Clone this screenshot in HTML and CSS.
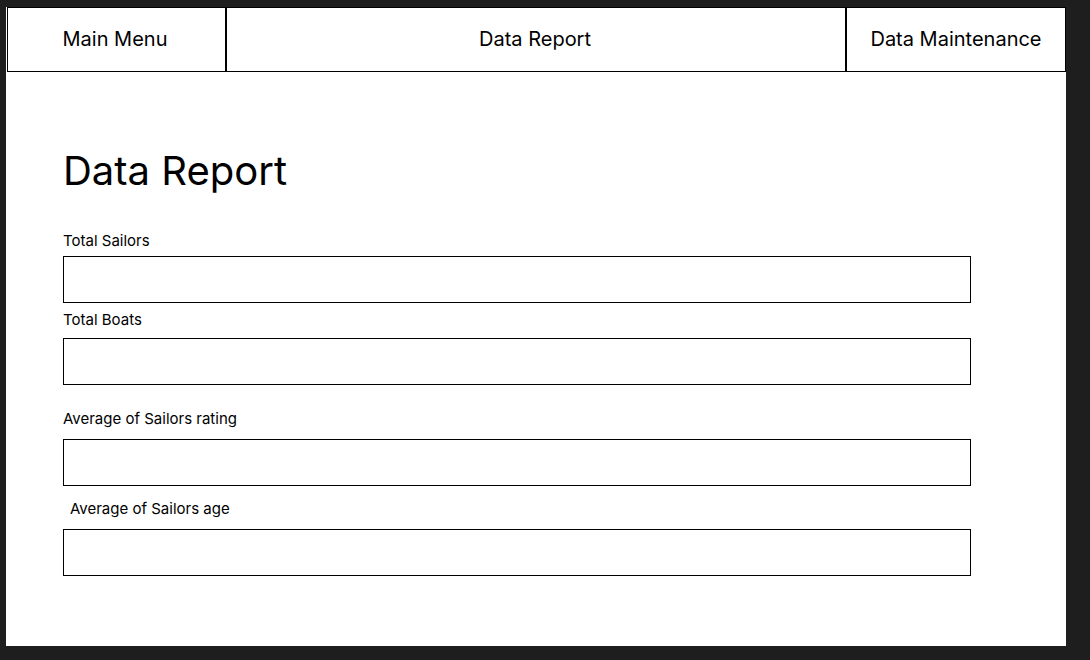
FILE: index.html
```html
<!DOCTYPE html>
<html>
<head>
<meta charset="utf-8">
<link rel="stylesheet" href="styles.css">
</head>
<body>
<div class="frame">
  <nav class="nav">
    <div class="tab tab-main">Main Menu</div>
    <div class="tab tab-report">Data Report</div>
    <div class="tab tab-maint">Data Maintenance</div>
  </nav>
  <main class="content">
    <h1 class="title">Data Report</h1>
    <div class="field f1">
      <div class="label">Total Sailors</div>
      <div class="box"></div>
    </div>
    <div class="field f2">
      <div class="label">Total Boats</div>
      <div class="box"></div>
    </div>
    <div class="field f3">
      <div class="label">Average of Sailors rating</div>
      <div class="box"></div>
    </div>
    <div class="field f4">
      <div class="label indent">Average of Sailors age</div>
      <div class="box"></div>
    </div>
  </main>
</div>
</body>
</html>
```
FILE: styles.css
```css
html, body {
  margin: 0;
  padding: 0;
  background: #1e1e1e;
  font-family: Inter, "Noto Sans", sans-serif;
  color: #000;
}
body {
  padding: 7px 0 0 6px;
  height: 660px;
  box-sizing: border-box;
}
.frame {
  width: 1060px;
  height: 639px;
  background: #fff;
  box-sizing: border-box;
}
.nav {
  display: flex;
  height: 65px;
}
.tab {
  box-sizing: border-box;
  border: 1px solid #000;
  display: flex;
  align-items: center;
  justify-content: center;
  font-size: 20px;
  height: 65px;
  padding-bottom: 2px;
}
.tab-main { width: 219px; margin-left: 1px; padding-right: 3px; }
.tab-report { width: 620px; padding-right: 2px; }
.tab-maint { width: 220px; }
.content {
  padding: 76px 0 0 57px;
}
.title {
  margin: 0;
  font-weight: 400;
  font-size: 40px;
  line-height: 46px;
}
.label {
  font-size: 15px;
  line-height: 18px;
}
.label.indent { padding-left: 7px; }
.box {
  box-sizing: border-box;
  width: 908px;
  height: 47px;
  border: 1px solid #000;
}
.f1 { margin-top: 38px; }
.f1 .box { margin-top: 6px; }
.f2 { margin-top: 8px; }
.f2 .box { margin-top: 9px; }
.f3 { margin-top: 25px; }
.f3 .box { margin-top: 11px; }
.f4 { margin-top: 14px; }
.f4 .box { margin-top: 11px; }
```
